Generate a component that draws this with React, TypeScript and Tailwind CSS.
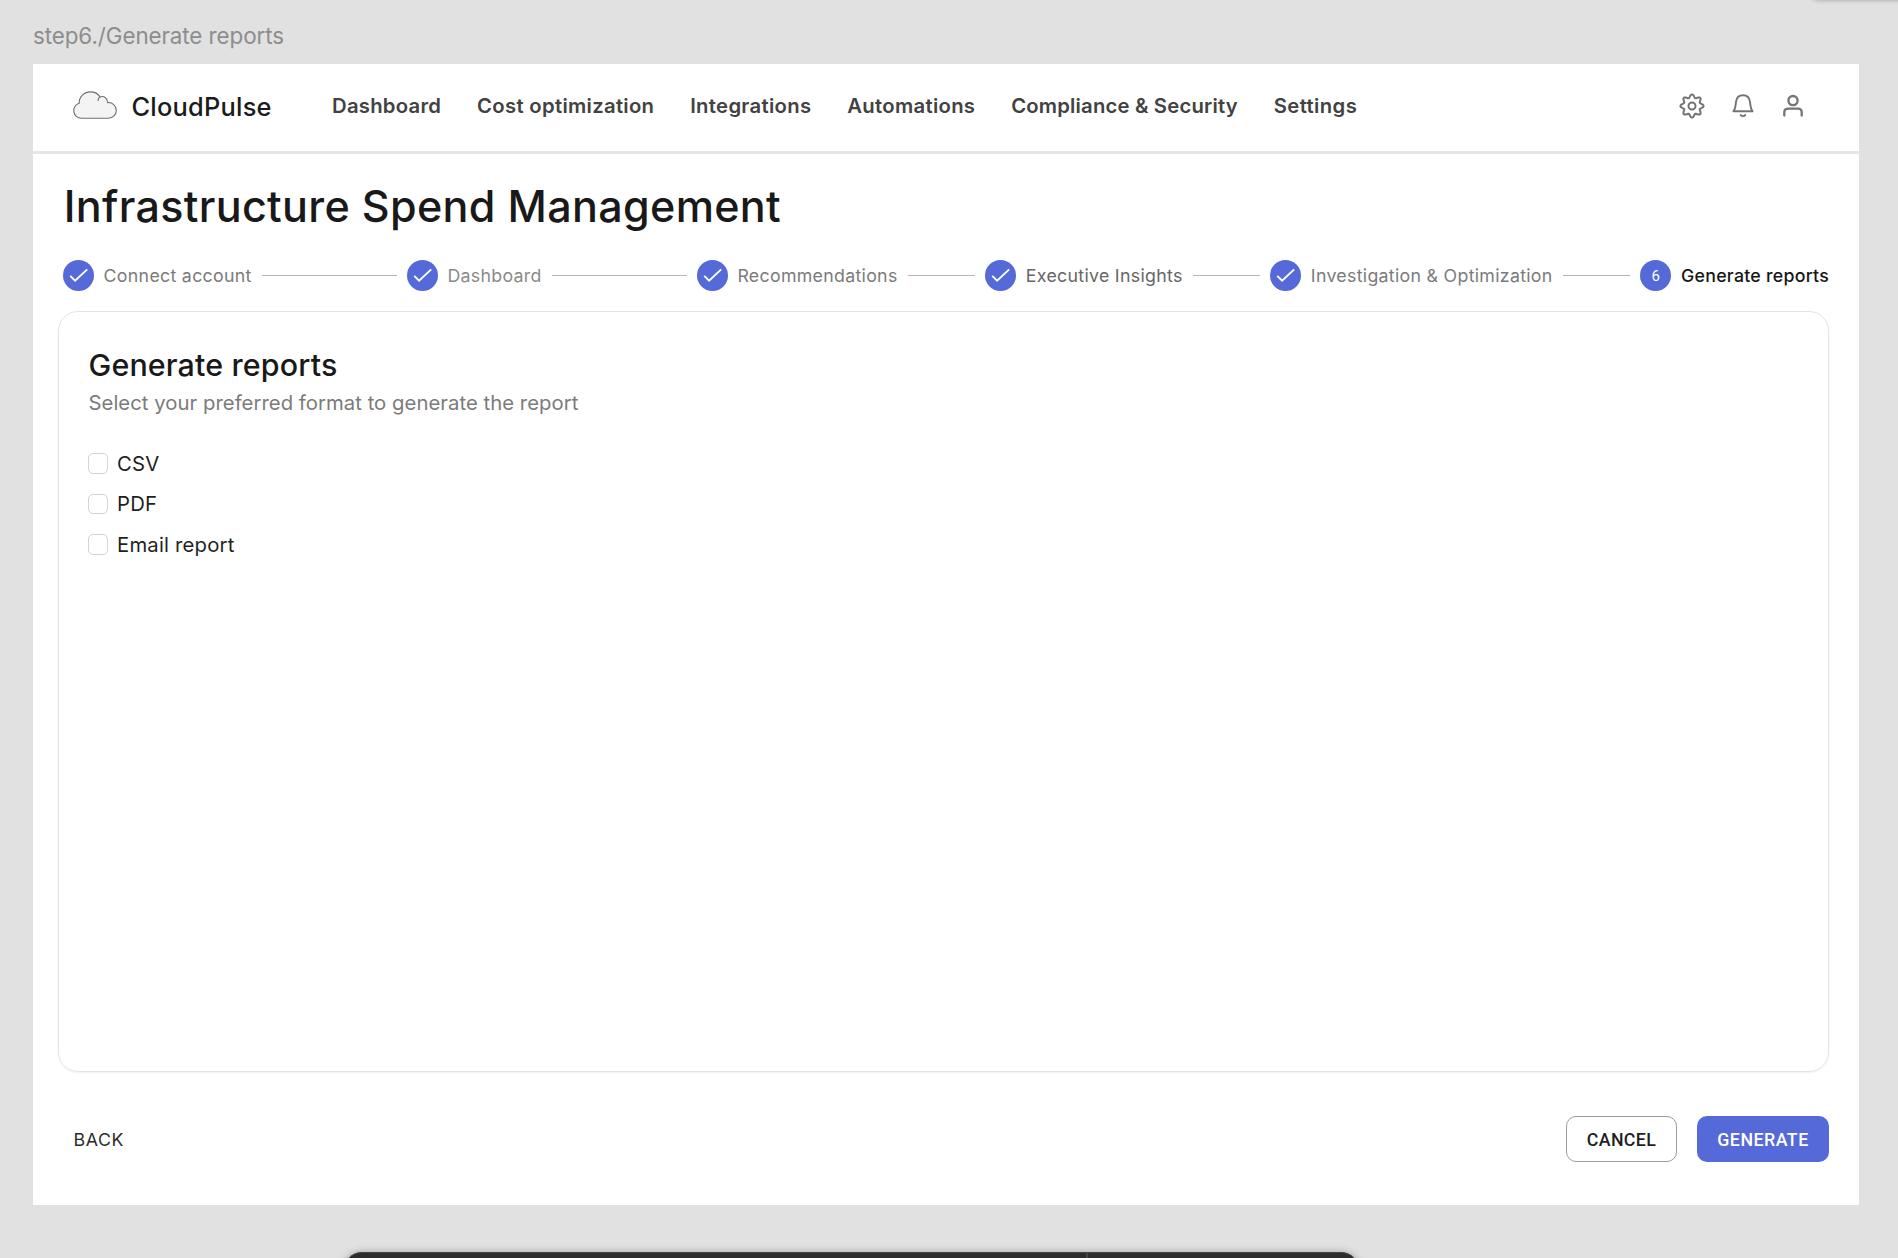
const navItems = [
  { label: "Dashboard", tracking: "tracking-[0.25px]" },
  { label: "Cost optimization", tracking: "tracking-[0.3px]" },
  { label: "Integrations", tracking: "tracking-[0.3px]" },
  { label: "Automations", tracking: "tracking-[0.3px]" },
  { label: "Compliance & Security", tracking: "tracking-[0.18px]" },
  { label: "Settings", tracking: "tracking-[0.38px]" },
];

const steps = [
  { label: "Connect account", text: "text-[#7b7b7b]", line: "flex-[2]" },
  { label: "Dashboard", text: "text-[#8a8a8a]", line: "flex-[2]" },
  { label: "Recommendations", text: "text-[#7b7b7b]", line: "flex-1" },
  { label: "Executive Insights", text: "text-[#666666]", line: "flex-1" },
  { label: "Investigation & Optimization", text: "text-[#7b7b7b]", line: "flex-1" },
];

const formats = ["CSV", "PDF", "Email report"];

// Eight soft teeth around the gear centre
const gearPoints = Array.from({ length: 96 }, (_, i) => {
  const angle = (i / 96) * Math.PI * 2;
  const radius = 10 + 1.6 * Math.cos(8 * angle);
  return `${(14 + radius * Math.cos(angle)).toFixed(2)},${(14 + radius * Math.sin(angle)).toFixed(2)}`;
}).join(" ");

function CloudLogo() {
  return (
    <svg width="46" height="30" viewBox="0 0 46 30" fill="none" stroke="#6f6f6f" strokeWidth="1.1">
      <path
        d="M9.3 28.2A7.6 7.6 0 0 1 7.2 13.3C7 6.8 12 1.9 18.6 1.9C22.4 1.9 26 3.7 28 6.9C31.8 5.4 35.6 8 35.7 12.6C40.5 12.2 44.3 15.8 44.3 20.4C44.3 24.8 40.8 28.2 36.4 28.2Z"
        fill="#f4f4f4"
      />
      <path d="M26.1 11C26 9 26.6 7.6 28 6.9" />
    </svg>
  );
}

function GearIcon() {
  return (
    <svg width="28" height="28" viewBox="0 0 28 28" fill="none" stroke="#747474" strokeWidth="2">
      <polygon points={gearPoints} strokeLinejoin="round" />
      <circle cx="14" cy="14" r="3.5" />
    </svg>
  );
}

function BellIcon() {
  return (
    <svg width="28" height="28" viewBox="0 0 28 28" fill="none" stroke="#747474" strokeWidth="1.9">
      <path
        d="M4.4 19.3H23.6C22.2 17.8 21.7 16.2 21.4 13.2L21 9.8C20.5 5.7 17.8 3.3 14 3.3S7.5 5.7 7 9.8L6.6 13.2C6.3 16.2 5.8 17.8 4.4 19.3Z"
        strokeLinejoin="round"
      />
      <path d="M11.8 23.1C12.8 24.5 15.2 24.5 16.2 23.1" strokeLinecap="round" />
    </svg>
  );
}

function PersonIcon() {
  return (
    <svg width="28" height="28" viewBox="0 0 28 28" fill="none" stroke="#747474" strokeWidth="2.3">
      <circle cx="14" cy="8.6" r="4.6" />
      <path d="M5.3 23.6V20.2C5.3 17.8 6.9 16.6 9.2 16.6H18.8C21.1 16.6 22.7 17.8 22.7 20.2V23.6" strokeLinecap="round" />
    </svg>
  );
}

function StepCheck() {
  return (
    <span className="size-[31px] shrink-0 rounded-full bg-[#5569d8]">
      <svg width="31" height="31" viewBox="0 0 31 31" fill="none" stroke="#ffffff" strokeWidth="1.9">
        <path d="M7.2 15.9L12.1 20.7L24.2 9.4" />
      </svg>
    </span>
  );
}

export default function App() {
  return (
    <div className="relative flex h-[1258px] w-[1898px] flex-col overflow-hidden bg-[#e1e1e1] pl-[33px] font-['Inter',sans-serif]">
      <p className="h-[63.5px] pt-[20px] text-[22.4px] leading-8 tracking-[-0.08px] text-[#8d8d8d]">
        step6./Generate reports
      </p>

      <main className="flex h-[1141.5px] w-[1826px] flex-col bg-white">
        <header className="flex h-[90px] items-start border-b-[3px] border-[#e6e6e6] pr-[51.6px] pl-[39px]">
          <div className="flex w-[260px] pt-[26px]">
            <CloudLogo />
            <span className="mt-px ml-[13.5px] text-[25.4px] leading-8 font-medium tracking-[0.24px] text-[#1b1b1b]">
              CloudPulse
            </span>
          </div>
          <nav className="flex gap-[35.9px] pt-[26px] text-[20.3px] leading-8 font-semibold whitespace-nowrap text-[#424242]">
            {navItems.map((item) => (
              <a key={item.label} className={item.tracking}>
                {item.label}
              </a>
            ))}
          </nav>
          <div className="ml-auto flex gap-[22.7px] pt-7">
            <GearIcon />
            <BellIcon />
            <PersonIcon />
          </div>
        </header>

        <h1 className="mt-[25.5px] ml-[30.7px] text-[43.1px] leading-[54px] font-medium tracking-[0.31px] text-[#191919]">
          Infrastructure Spend Management
        </h1>

        <div className="mt-[27px] ml-[30px] flex h-[31px] w-[1766px] items-center text-[17.75px] leading-6 whitespace-nowrap">
          {steps.map((step) => (
            <div key={step.label} className={`contents ${step.text}`}>
              <StepCheck />
              <span className="ml-[9.6px] tracking-[0.3px]">{step.label}</span>
              <span className={`mr-[9.8px] ml-[10.4px] h-px bg-[#b4b4b4] ${step.line}`} />
            </div>
          ))}
          <span className="flex size-[31px] shrink-0 items-center justify-center rounded-full bg-[#5569d8] font-['Roboto',sans-serif] text-[15px] text-white">
            6
          </span>
          <span className="ml-[9.8px] font-medium tracking-[0.25px] text-[#161616]">Generate reports</span>
        </div>

        <section className="mt-5 ml-[25px] h-[761px] w-[1771px] rounded-[20px] border-[1.5px] border-[#e4e4e4] px-[29.5px] pt-[33px] shadow-[0_1px_2px_rgba(0,0,0,0.06)]">
          <h2 className="text-[30.4px] leading-10 font-medium tracking-[0.16px] text-[#191919]">Generate reports</h2>
          <p className="mt-0.5 text-[20.3px] leading-8 tracking-[0.04px] text-[#7b7b7b]">
            Select your preferred format to generate the report
          </p>
          <div className="mt-[24px] flex flex-col">
            {formats.map((format) => (
              <label key={format} className="flex h-[40.6px] items-center text-[20.3px] tracking-[0.2px] text-[#1f1f1f]">
                <input
                  type="checkbox"
                  className="mr-[9px] -ml-px size-[20.5px] appearance-none rounded-[5px] border-[1.5px] border-[#d3d3d3]"
                />
                <span className="pt-px">{format}</span>
              </label>
            ))}
          </div>
        </section>

        <footer className="mt-11 flex h-[46px] items-center pr-[30px] pl-[40.5px] text-[17.75px]">
          <button className="pt-0.5 tracking-[0.6px] text-[#2b2b2b]">BACK</button>
          <button className="ml-auto h-[46px] w-[111px] rounded-[10px] border border-[#9c9c9c] pt-0.5 font-['Roboto',sans-serif] font-medium tracking-[0.4px] text-[#1f1f1f]">
            CANCEL
          </button>
          <button className="ml-5 h-[46px] w-[132px] rounded-[10px] bg-[#5569d8] pt-0.5 font-['Roboto',sans-serif] font-medium tracking-[0.5px] text-white">
            GENERATE
          </button>
        </footer>
      </main>

      {/* Canvas toolbars, mostly scrolled past the window edges */}
      <div className="absolute top-[1252px] left-[344px] flex h-16 w-[1015px] rounded-[18px] border-t border-[#454545] bg-[#2c2c2c] shadow-[0_1px_8px_rgba(0,0,0,0.35)]">
        <span className="ml-[742px] w-0.5 bg-[#454545]" />
      </div>
      <div className="absolute -top-16 left-[1808px] h-16 w-28 rounded-xl bg-white shadow-[0_0_5px_rgba(0,0,0,0.3)]" />
    </div>
  );
}
